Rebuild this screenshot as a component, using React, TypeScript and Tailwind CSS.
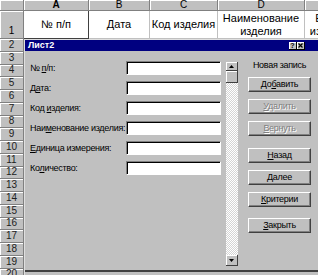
import React from 'react';

const columns = [
  { letter: 'A', width: 'w-[65px] min-w-[65px]', title: ['№ п/п'], active: true },
  { letter: 'B', width: 'w-[61px] min-w-[61px]', title: ['Дата'], active: false },
  { letter: 'C', width: 'w-[68px] min-w-[68px]', title: ['Код изделия'], active: false },
  { letter: 'D', width: 'w-[87px] min-w-[87px]', title: ['Наименование', 'изделия'], active: false },
  { letter: 'E', width: 'w-[66px] min-w-[66px]', title: ['Единица', 'измерения'], active: false },
];

const rowNumbers = [2, 3, 4, 5, 6, 7, 8, 9, 10, 11, 12, 13, 14, 15, 16, 17, 18, 19, 20];

// label split as [before, accelerator, after]
const fields = [
  ['№ ', 'п', '/п:'],
  ['Д', 'а', 'та:'],
  ['Код ', 'и', 'зделия:'],
  ['Наи', 'м', 'енование изделия:'],
  ['', 'Е', 'диница измерения:'],
  ['Ко', 'л', 'ичество:'],
];

const buttons = [
  { parts: ['До', 'б', 'авить'], disabled: false, extra: '' },
  { parts: ['', 'У', 'далить'], disabled: true, extra: '' },
  { parts: ['', 'В', 'ернуть'], disabled: true, extra: '' },
  { parts: ['', 'Н', 'азад'], disabled: false, extra: 'mt-[5px]' },
  { parts: ['', 'Д', 'алее'], disabled: false, extra: '' },
  { parts: ['', 'К', 'ритерии'], disabled: false, extra: '' },
  { parts: ['', 'З', 'акрыть'], disabled: false, extra: 'mt-[4px]' },
];

const Accel = ({ parts }: { parts: string[] }) => (
  <span className="whitespace-pre">
    {parts[0]}
    <span className="underline underline-offset-1">{parts[1]}</span>
    {parts[2]}
  </span>
);

const DataForm = () => {
  return (
    <div className="absolute left-[24px] top-[39px] right-0 bottom-0 flex flex-col bg-[#c0c0c0] border-l border-t border-l-[#dfdfdf] border-t-[#dfdfdf]">
      <div className="flex h-[11px] shrink-0 items-center bg-[#000080] pl-[3px] pr-[13px]">
        <span className="text-[9px] font-bold leading-none text-white">Лист2</span>
        <div className="ml-auto flex">
          <div className="flex h-[8px] w-[8px] items-center justify-center bg-[#c0c0c0] border-r border-b border-r-black border-b-black shadow-[inset_1px_1px_0_#fff] text-[7px] font-bold leading-none text-black">
            ?
          </div>
          <div className="flex h-[8px] w-[8px] items-center justify-center bg-[#c0c0c0] border-r border-b border-r-black border-b-black shadow-[inset_1px_1px_0_#fff]">
            <svg width="5" height="5" viewBox="0 0 5 5">
              <path d="M0.5 0.5 L4.5 4.5 M4.5 0.5 L0.5 4.5" stroke="#000" strokeWidth="1.2" />
            </svg>
          </div>
        </div>
      </div>

      <div className="flex h-[219px] shrink-0 pl-[5px] text-[9px] leading-none tracking-[-0.3px] text-black">
        <div className="mt-[10px] grid grid-cols-[96px_95px] auto-rows-[14px] gap-y-[6px] self-start">
          {fields.map((f) => (
            <React.Fragment key={f.join('')}>
              <div className="flex items-center">
                <Accel parts={f} />
              </div>
              <div className="bg-white border border-t-[#808080] border-l-[#808080] border-b-white border-r-white shadow-[inset_1px_1px_0_#000]" />
            </React.Fragment>
          ))}
        </div>

        <div className="ml-[5px] mt-[11px] flex h-[204px] w-[12px] flex-col">
          <div className="flex h-[9px] items-center justify-center bg-[#c0c0c0] border-r border-b border-r-[#404040] border-b-[#404040] shadow-[inset_1px_1px_0_#fff]">
            <svg width="5" height="3" viewBox="0 0 5 3">
              <path d="M2.5 0 L5 3 L0 3 Z" fill="#000" />
            </svg>
          </div>
          <div className="h-[12px] bg-[#c0c0c0] border-r border-b border-r-[#404040] border-b-[#404040] shadow-[inset_1px_1px_0_#fff]" />
          <div className="flex-1 bg-[repeating-conic-gradient(#ffffff_0%_25%,#d4d4d4_0%_50%)] bg-size-[2px_2px]" />
          <div className="flex h-[11px] items-center justify-center bg-[#c0c0c0] border-r border-b border-r-[#404040] border-b-[#404040] shadow-[inset_1px_1px_0_#fff]">
            <svg width="5" height="3" viewBox="0 0 5 3">
              <path d="M0 0 L5 0 L2.5 3 Z" fill="#000" />
            </svg>
          </div>
        </div>

        <div className="ml-[10px] flex w-[63px] flex-col pt-[10px]">
          <div className="h-[10px] text-center whitespace-nowrap">Новая запись</div>
          <div className="mt-[6px] flex flex-col gap-[7px]">
            {buttons.map((b) => (
              <div
                key={b.parts.join('')}
                className={`flex h-[15px] items-center justify-center bg-[#c0c0c0] border border-t-white border-l-white border-r-[#404040] border-b-[#404040] shadow-[inset_-1px_-1px_0_#808080] ${b.extra} ${
                  b.disabled ? 'text-[#808080] [text-shadow:1px_1px_0_#fff]' : 'text-black'
                }`}
              >
                <Accel parts={b.parts} />
              </div>
            ))}
          </div>
        </div>
      </div>
      <div className="h-[2px] shrink-0 bg-[#404040]" />
    </div>
  );
};

const App = () => {
  return (
    <div className="relative h-[275px] w-[318px] overflow-hidden bg-white font-['Liberation_Sans',Arial,sans-serif] text-black">
      {/* column headers */}
      <div className="flex h-[11px] w-max">
        <div className="w-[24px] shrink-0 bg-[#c0c0c0] border-r border-b border-r-[#808080] border-b-[#808080] shadow-[inset_1px_1px_0_#fff]" />
        {columns.map((c) => (
          <div
            key={c.letter}
            className={`${c.width} flex shrink-0 items-center justify-center bg-[#c0c0c0] border-r border-b border-r-[#808080] border-b-[#808080] shadow-[inset_1px_1px_0_#fff] text-[10px] leading-none ${
              c.active ? 'font-bold' : ''
            }`}
          >
            {c.letter}
          </div>
        ))}
      </div>

      {/* row 1 */}
      <div className="flex h-[28px] w-max">
        <div className="flex w-[24px] shrink-0 items-end justify-center pb-[2px] bg-[#c0c0c0] border-r border-b border-r-[#808080] border-b-[#808080] shadow-[inset_1px_1px_0_#fff] text-[10px] leading-none">
          1
        </div>
        {columns.map((c) => (
          <div
            key={c.letter}
            className={`${c.width} flex shrink-0 flex-col items-center justify-center border-r border-b border-[#c0c0c0] text-[11px] leading-[13px] whitespace-nowrap ${
              c.active ? 'border-r-[#404040] border-b-[#404040]' : ''
            }`}
          >
            {c.title.map((t) => (
              <span key={t}>{t}</span>
            ))}
          </div>
        ))}
      </div>

      {/* rows 2..20 */}
      {rowNumbers.map((n) => (
        <div key={n} className="flex h-[12.75px]">
          <div className="flex w-[24px] shrink-0 items-center justify-center bg-[#c0c0c0] border-r border-b border-r-[#808080] border-b-[#808080] shadow-[inset_1px_1px_0_#fff] text-[10px] leading-none text-[#202020]">
            {n}
          </div>
          <div className="flex-1 border-b border-[#c0c0c0]" />
        </div>
      ))}

      <DataForm />
    </div>
  );
};

export default App;
